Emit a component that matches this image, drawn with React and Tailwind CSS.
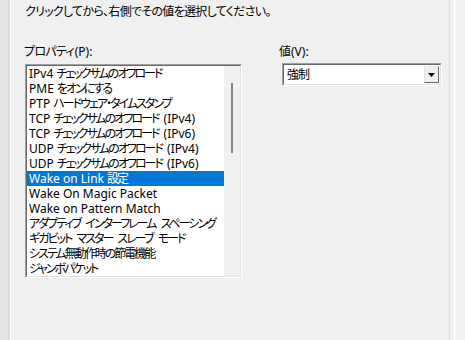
import React from 'react';

const items = [
  'IPv4 チェックサムのオフロード',
  'PME をオンにする',
  'PTP ハードウェア・タイムスタンプ',
  'TCP チェックサムのオフロード (IPv4)',
  'TCP チェックサムのオフロード (IPv6)',
  'UDP チェックサムのオフロード (IPv4)',
  'UDP チェックサムのオフロード (IPv6)',
  'Wake on Link 設定',
  'Wake On Magic Packet',
  'Wake on Pattern Match',
  'アダプティブ インターフレーム スペーシング',
  'ギガビット マスター スレーブ モード',
  'システム無動作時の節電機能',
  'ジャンボパケット',
];

const selected = 7;

// Japanese runs are set tighter, like the narrow UI font in the shot
const cjk = /([\u3000-\u30ff\u4e00-\u9fff\uff00-\uffef]+)/;

const Label = ({ text, tight = false }) =>
  text.split(cjk).map((part, i) =>
    cjk.test(part) ? (
      <span key={i} className={tight ? 'tracking-[-2px] mr-[2px]' : 'tracking-[-0.7px] mr-[0.7px]'}>
        {part}
      </span>
    ) : (
      <span key={i}>{part}</span>
    )
  );

const PropertyList = () => (
  <div className="w-[217px] border border-t-[#a0a0a0] border-l-[#a0a0a0] border-r-white border-b-white">
    <div className="flex border border-t-[#696969] border-l-[#696969] border-r-[#e3e3e3] border-b-[#e3e3e3] bg-white">
      <ul className="flex-1 min-w-0">
        {items.map((item, i) => (
          <li
            key={item}
            className={`flex h-[15px] pl-[2px] leading-[15px] whitespace-pre overflow-hidden ${
              i === selected ? 'bg-[#0078d7] text-white' : 'text-black'
            }`}
          >
            <Label text={item} tight />
          </li>
        ))}
      </ul>
      {/* thin scrollbar */}
      <div className="w-[16px] shrink-0 bg-[#f0f0f0]">
        <div className="ml-[7px] mt-[17px] w-[2px] h-[70px] bg-[#858585]" />
      </div>
    </div>
  </div>
);

const ValueCombo = () => (
  <div className="w-[160px] border border-t-[#a0a0a0] border-l-[#a0a0a0] border-r-white border-b-white">
    <div className="flex h-[21px] items-center border border-t-[#696969] border-l-[#696969] border-r-[#e3e3e3] border-b-[#e3e3e3] bg-white">
      <span className="flex-1 pl-[3px] leading-[15px] tracking-[-1px]">強制</span>
      <div className="mr-px h-[17px] w-[15px] border border-t-[#e3e3e3] border-l-[#e3e3e3] border-r-[#696969] border-b-[#696969] bg-[#f0f0f0] flex items-center justify-center">
        <svg width="7" height="4" viewBox="0 0 7 4">
          <path d="M0 0h7L3.5 4z" fill="#000" />
        </svg>
      </div>
    </div>
  </div>
);

export default function App() {
  return (
    <div
      className="flex w-[465px] h-[340px] overflow-hidden bg-[#f0f0f0] text-[12px] text-black [font-feature-settings:'palt']"
      style={{ fontFamily: '"Noto Sans", "Noto Sans CJK JP", sans-serif' }}
    >
      {/* edge of the window behind */}
      <div className="w-[8px] bg-[#e6e6e6]" />
      <div className="w-[2px] bg-[#d9d9d9]" />
      <div className="w-px bg-white" />

      <div className="w-[438px] pl-[14px] pt-[4px]">
        <p className="flex h-[15px] leading-[15px] whitespace-pre">
          <Label text="クリックしてから、右側でその値を選択してください。" />
        </p>

        <div className="mt-[25px] flex">
          <div>
            <p className="flex h-[15px] leading-[15px] mb-[5px] -ml-px whitespace-pre">
              <Label text="プロパティ(P):" />
            </p>
            <PropertyList />
          </div>
          <div className="ml-[37px]">
            <p className="flex h-[15px] leading-[15px] mb-[4px] whitespace-pre">
              <Label text="値(V):" />
            </p>
            <div className="ml-[3px]">
              <ValueCombo />
            </div>
          </div>
        </div>
      </div>

      <div className="w-px bg-[#dcdcdc]" />
      <div className="w-[4px]" />
      <div className="w-px bg-white" />
      <div className="flex-1 bg-[#f2f2f2]" />
    </div>
  );
}
